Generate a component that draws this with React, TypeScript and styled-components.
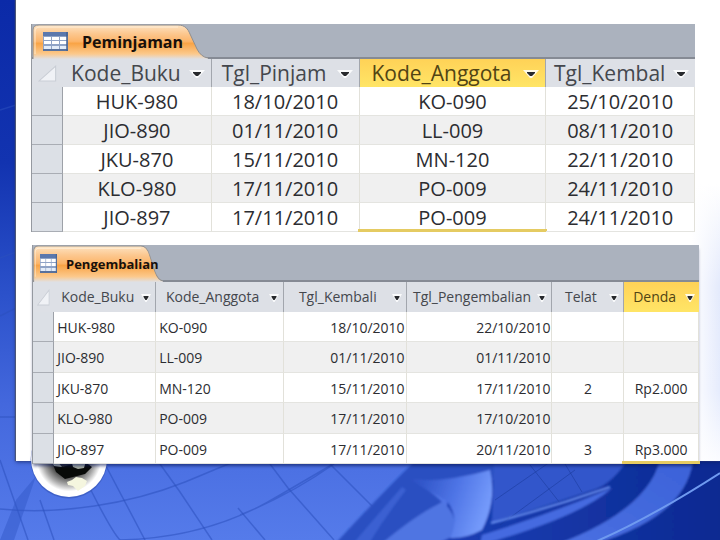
import React from "react";
import styled, { createGlobalStyle, css } from "styled-components";

type Variant = "wide" | "narrow";
type Align = "left" | "center" | "right";

interface Column {
  label: string;
  width: string;
  align: Align;
  active?: boolean;
}

interface Sheet {
  title: string;
  variant: Variant;
  gutter: string;
  columns: Column[];
  rows: string[][];
}

const sheets: Sheet[] = [
  {
    title: "Peminjaman",
    variant: "wide",
    gutter: "4.7%",
    columns: [
      { label: "Kode_Buku", width: "22.4%", align: "center" },
      { label: "Tgl_Pinjam", width: "22.3%", align: "center" },
      { label: "Kode_Anggota", width: "28.2%", align: "center", active: true },
      { label: "Tgl_Kembal", width: "22.4%", align: "center" },
    ],
    rows: [
      ["HUK-980", "18/10/2010", "KO-090", "25/10/2010"],
      ["JIO-890", "01/11/2010", "LL-009", "08/11/2010"],
      ["JKU-870", "15/11/2010", "MN-120", "22/11/2010"],
      ["KLO-980", "17/11/2010", "PO-009", "24/11/2010"],
      ["JIO-897", "17/11/2010", "PO-009", "24/11/2010"],
    ],
  },
  {
    title: "Pengembalian",
    variant: "narrow",
    gutter: "3.2%",
    columns: [
      { label: "Kode_Buku", width: "15.3%", align: "left" },
      { label: "Kode_Anggota", width: "19.2%", align: "left" },
      { label: "Tgl_Kembali", width: "18.4%", align: "right" },
      { label: "Tgl_Pengembalian", width: "21.9%", align: "right" },
      { label: "Telat", width: "10.8%", align: "center" },
      { label: "Denda", width: "11.2%", align: "center", active: true },
    ],
    rows: [
      ["HUK-980", "KO-090", "18/10/2010", "22/10/2010", "", ""],
      ["JIO-890", "LL-009", "01/11/2010", "01/11/2010", "", ""],
      ["JKU-870", "MN-120", "15/11/2010", "17/11/2010", "2", "Rp2.000"],
      ["KLO-980", "PO-009", "17/11/2010", "17/10/2010", "", ""],
      ["JIO-897", "PO-009", "17/11/2010", "20/11/2010", "3", "Rp3.000"],
    ],
  },
];

const GlobalStyle = createGlobalStyle`
  *, *::before, *::after { box-sizing: border-box; }
  body { margin: 0; background: #2c50c8; }
`;

const Page = styled.main`
  position: relative;
  min-height: 100vh;
  overflow: hidden;
  padding-left: 16px;
`;

const Backdrop = styled.svg`
  position: absolute;
  inset: 0;
  width: 100%;
  height: 100%;
`;

const Panel = styled.div`
  position: relative;
  display: flex;
  flex-direction: column;
  gap: 13px;
  padding-top: 24px;
  background: linear-gradient(to bottom, #fff 40%, #e4eafc 62%, #e6ecfd 85%, #fbfcff 100%);
  box-shadow: -1px 0 1px 0 #4a5578, 0 1px 4px 0 rgba(10, 25, 90, 0.7);

  &::before {
    content: "";
    position: absolute;
    inset: 0 0 0 0;
    background: linear-gradient(to right, #fff 96%, rgba(255, 255, 255, 0));
  }
`;

const Globe = styled.svg`
  position: absolute;
  left: 13px;
  bottom: -38px;
  width: 80px;
  height: 80px;
`;

const Window = styled.section<{ $variant: Variant }>`
  position: relative;
  background: #fff;
  border-left: 1px solid #9599a0;
  font-family: "Open Sans", "Noto Sans", sans-serif;
  color: #2c2d31;
  ${(p) =>
    p.$variant === "wide"
      ? css`
          margin: 0 25px 0 15px;
        `
      : css`
          margin: 0 21px -3px 16px;
          box-shadow: 0 3px 3px -1px rgba(10, 25, 90, 0.6);
        `}
`;

const TabBar = styled.div<{ $variant: Variant }>`
  display: flex;
  align-items: flex-end;
  height: ${(p) => (p.$variant === "wide" ? 35 : 37)}px;
  background: #abb2be;
  border-bottom: 2px solid #858a94;
`;

const Tab = styled.button<{ $variant: Variant }>`
  position: relative;
  display: flex;
  align-items: center;
  gap: ${(p) => (p.$variant === "wide" ? 14 : 9)}px;
  width: ${(p) => (p.$variant === "wide" ? 176 : 130)}px;
  height: calc(100% + 2px);
  margin-bottom: -2px;
  padding: 0 0 0 ${(p) => (p.$variant === "wide" ? 11 : 7)}px;
  border: 0;
  background: none;
  color: #17100c;
  font-family: inherit;
  font-size: ${(p) => (p.$variant === "wide" ? 16 : 13)}px;
  font-weight: 700;
  white-space: nowrap;
`;

const TabShape = styled.svg`
  position: absolute;
  inset: 0;
  width: 100%;
  height: 100%;
`;

const SheetIcon = styled.svg<{ $variant: Variant }>`
  position: relative;
  flex: none;
  width: ${(p) => (p.$variant === "wide" ? 25 : 17)}px;
  height: 19px;
`;

const TabLabel = styled.span`
  position: relative;
`;

const Grid = styled.table<{ $variant: Variant }>`
  width: 100%;
  table-layout: fixed;
  border-collapse: separate;
  border-spacing: 0;
  font-size: ${(p) => (p.$variant === "wide" ? 20 : 14)}px;
  line-height: 26px;
`;

const Col = styled.col<{ $width: string }>`
  width: ${(p) => p.$width};
`;

const HeadRow = styled.tr<{ $variant: Variant }>`
  height: ${(p) => (p.$variant === "wide" ? 28 : 30)}px;
`;

const HeadCell = styled.th<{ $active?: boolean }>`
  padding: 0;
  font-weight: 400;
  border-right: 1px solid #a2a6ad;
  background: ${(p) =>
    p.$active ? "linear-gradient(to bottom, #ffd257, #ffe566)" : "#dde0e6"};
  color: ${(p) => (p.$active ? "#514414" : "#44474d")};

  &:last-child {
    border-right: 0;
  }
`;

const Corner = styled.td`
  padding: 0;
  background: #dde0e6;
`;

const CornerMark = styled.svg`
  display: block;
  width: 60%;
  height: 17px;
  margin-left: 20%;
`;

const HeadContent = styled.div`
  display: flex;
  align-items: center;
`;

const HeadText = styled.span<{ $variant: Variant }>`
  flex: 1;
  min-width: 0;
  text-align: center;
  white-space: nowrap;
  font-size: ${(p) => (p.$variant === "wide" ? 21 : 14)}px;
`;

const FilterButton = styled.button<{ $variant: Variant }>`
  display: grid;
  place-items: center;
  flex: none;
  width: ${(p) => (p.$variant === "wide" ? 16 : 10)}px;
  height: 10px;
  margin-right: ${(p) => (p.$variant === "wide" ? 6 : 4)}px;
  padding: 0;
  border: 0;
  background: none;

  svg {
    display: block;
    width: 100%;
    height: 9px;
  }
`;

const BodyRow = styled.tr<{ $variant: Variant }>`
  height: ${(p) => (p.$variant === "wide" ? 29 : 30)}px;
  background: #fff;

  &:nth-child(even) {
    height: ${(p) => (p.$variant === "wide" ? 29 : 31)}px;
    background: #f0f0f0;
  }
`;

const Selector = styled.td`
  padding: 0;
  background: #dce0e6;
  border-right: 1px solid #9da1a8;
  border-bottom: 1px solid #a9adb4;
`;

const Cell = styled.td<{ $align: Align; $marked: boolean }>`
  position: relative;
  padding: 2px 1px 0 ${(p) => (p.$align === "left" ? 3 : 1)}px;
  text-align: ${(p) => p.$align};
  white-space: nowrap;
  border-right: 1px solid #e2e1da;
  border-bottom: 1px solid #e4e4e0;

  ${(p) =>
    p.$marked &&
    css`
      &::after {
        content: "";
        position: absolute;
        left: -2px;
        right: -2px;
        bottom: -1px;
        height: 3px;
        background: #e5cb62;
      }
    `}
`;

function DataSheet({ sheet }: { sheet: Sheet }) {
  const { variant, columns, rows, title, gutter } = sheet;
  const gradientId = `tab-${variant}`;
  return (
    <Window $variant={variant} aria-label={title}>
      <TabBar $variant={variant} role="tablist">
        <Tab $variant={variant} type="button" role="tab" aria-selected="true">
          <TabShape viewBox="0 0 176 35" preserveAspectRatio="none" aria-hidden="true">
            <defs>
              <linearGradient id={gradientId} x1="0" y1="0" x2="0" y2="1">
                <stop offset="0" stopColor="#fde3c3" />
                <stop offset="0.25" stopColor="#fcc890" />
                <stop offset="0.48" stopColor="#fcb56a" />
                <stop offset="0.54" stopColor="#f9a446" />
                <stop offset="0.85" stopColor="#fcc98c" />
                <stop offset="1" stopColor="#dfe0e4" />
              </linearGradient>
            </defs>
            <path
              d="M1 35V6Q1 1 7 1H146C153 1 156 5 158 10L165 25Q169 33 176 34V35Z"
              fill={`url(#${gradientId})`}
            />
            <path
              d="M1 35V6Q1 1 7 1H146C153 1 156 5 158 10L165 25Q169 33 176 34"
              fill="none"
              stroke="#8f8f90"
            />
            <path d="M3 30V7Q3 3 8 3H146" fill="none" stroke="#fff1dd" strokeOpacity="0.8" />
          </TabShape>
          <SheetIcon $variant={variant} viewBox="0 0 25 19" preserveAspectRatio="none" aria-hidden="true">
            <rect width="25" height="19" fill="#8fa3c6" />
            <rect width="25" height="4" fill="#5b78ad" />
            {[5, 9, 14].map((y, row) =>
              [1, 9, 17].map((x) => (
                <rect key={`${x}-${y}`} x={x} y={y} width="7" height="3" fill={row === 2 ? "#e3ecf8" : "#fff"} />
              )),
            )}
            <path d="M0 18H25M24 0V19" stroke="#47628f" strokeWidth="1.5" />
          </SheetIcon>
          <TabLabel>{title}</TabLabel>
        </Tab>
      </TabBar>
      <Grid $variant={variant}>
        <colgroup>
          <Col $width={gutter} />
          {columns.map((c) => (
            <Col key={c.label} $width={c.width} />
          ))}
        </colgroup>
        <thead>
          <HeadRow $variant={variant}>
            <Corner>
              <CornerMark viewBox="0 0 18 16" preserveAspectRatio="none" aria-hidden="true">
                <path d="M1 15H17V1Z" fill="#f0f2f6" stroke="#c9cdd5" />
              </CornerMark>
            </Corner>
            {columns.map((c) => (
              <HeadCell key={c.label} scope="col" $active={c.active}>
                <HeadContent>
                  <HeadText $variant={variant}>{c.label}</HeadText>
                  <FilterButton $variant={variant} type="button" aria-label={`Filter ${c.label}`}>
                    <svg viewBox="0 0 16 9" preserveAspectRatio="none" aria-hidden="true">
                      <path d="M0 1H16L9 9H7Z" fill="#fff" fillOpacity="0.85" />
                      <path d="M4 3H12V4L9 7H7L4 4Z" fill="#27292d" />
                    </svg>
                  </FilterButton>
                </HeadContent>
              </HeadCell>
            ))}
          </HeadRow>
        </thead>
        <tbody>
          {rows.map((row, r) => (
            <BodyRow key={row[0]} $variant={variant}>
              <Selector />
              {row.map((value, i) => (
                <Cell
                  key={columns[i].label}
                  $align={columns[i].align}
                  $marked={Boolean(columns[i].active) && r === rows.length - 1}
                >
                  {value}
                </Cell>
              ))}
            </BodyRow>
          ))}
        </tbody>
      </Grid>
    </Window>
  );
}

function Scene() {
  return (
    <Backdrop viewBox="0 0 720 540" preserveAspectRatio="none" aria-hidden="true">
      <defs>
        <linearGradient id="sky" x1="0" y1="0" x2="0" y2="1">
          <stop offset="0" stopColor="#0b2aa8" />
          <stop offset="0.3" stopColor="#1233b0" />
          <stop offset="0.55" stopColor="#2c52cb" />
          <stop offset="0.75" stopColor="#4468dd" />
          <stop offset="1" stopColor="#557bea" />
        </linearGradient>
        <linearGradient id="deep" x1="0" y1="0" x2="1" y2="0">
          <stop offset="0" stopColor="#1c40b6" />
          <stop offset="1" stopColor="#0a2890" />
        </linearGradient>
        <linearGradient id="blade" x1="0" y1="0" x2="1" y2="0.3">
          <stop offset="0" stopColor="#2449bd" />
          <stop offset="0.6" stopColor="#4f75e6" />
          <stop offset="1" stopColor="#7399fa" />
        </linearGradient>
        <linearGradient id="ribbon" x1="1" y1="0" x2="0" y2="1">
          <stop offset="0" stopColor="#3c62d8" />
          <stop offset="1" stopColor="#4a70e2" />
        </linearGradient>
        <filter id="soft">
          <feGaussianBlur stdDeviation="1.3" />
        </filter>
      </defs>
      <rect width="720" height="540" fill="url(#sky)" />
      <g fill="none" stroke="#2c50bd" strokeOpacity="0.55" strokeWidth="1.5">
        <path d="M0 110L16 105M0 258L16 252M0 316L16 308M0 417H16M0 509C60 515 130 504 185 482S262 445 282 462" />
        <path d="M0 460L28 540M40 500L54 540M78 464Q110 530 120 540M106 466L145 540M160 464L180 492L212 540M270 464L288 488L334 540M238 508L265 540M330 464L380 514L400 540" />
        <path d="M120 540Q210 538 280 495L340 460M240 515Q290 495 334 464" />
      </g>
      <path d="M16 500L0 540H14L36 476Z" fill="#3157c8" fillOpacity="0.5" />
      <g filter="url(#soft)">
        <path d="M440 545L455 460H730V545Z" fill="url(#deep)" />
        <path d="M334 545Q380 495 414 462H500V480L412 480Q430 490 442 502L380 545Z" fill="#2b50c1" />
        <path d="M352 545Q380 512 402 487L406 490Q384 518 368 545Z" fill="#3a60d2" />
        <path d="M380 545Q418 513 443 502Q459 516 454 535Q440 545 420 545Z" fill="#4f75e2" />
        <path d="M494 462H626Q610 486 590 491L492 523Z" fill="#3157cb" />
        <path d="M410 480Q449 482 490 470Q497 501 482 530Q465 539 450 538Q460 518 447 501Z" fill="url(#blade)" />
        <path d="M482 535Q550 514 612 488Q580 517 480 545Z" fill="#456be0" />
        <path d="M555 545Q647 511 660 460H693Q686 518 590 545Z" fill="url(#ribbon)" />
      </g>
      <g fill="none" stroke="#183798" strokeOpacity="0.5">
        <path d="M495 500L550 462M500 525L575 470M530 465L560 503M565 464L582 492" />
      </g>
      <path d="M491 523Q550 508 610 487" fill="none" stroke="#6b90f0" strokeWidth="2" filter="url(#soft)" />
      <path d="M597 541Q650 518 720 473" fill="none" stroke="#6f9af0" strokeWidth="2" />
    </Backdrop>
  );
}

export default function App() {
  return (
    <>
      <GlobalStyle />
      <Page>
        <Scene />
        <Panel>
          <Globe viewBox="0 0 80 80" aria-hidden="true">
            <defs>
              <radialGradient id="globe">
                <stop offset="0" stopColor="#1b1b1b" />
                <stop offset="0.4" stopColor="#30302f" />
                <stop offset="0.68" stopColor="#aaa" />
                <stop offset="0.85" stopColor="#fff" />
              </radialGradient>
            </defs>
            <circle cx="40" cy="41" r="38.5" fill="#3454b6" fillOpacity="0.6" />
            <circle cx="40" cy="40" r="38" fill="url(#globe)" />
            <path d="M23 43L34 48L43 45L56 43L63 48L56 55L48 57L36 60L27 53Z" fill="#080a08" />
            <path d="M43 44L57 42L55 49L49 50L44 48ZM22 42H28L33 48L25 47Z" fill="#a9afa2" />
            <path d="M38 63L43 61L47 58L53 59L58 62L56 67L49 72L44 67L39 66Z" fill="#f5f6df" />
          </Globe>
          {sheets.map((sheet) => (
            <DataSheet key={sheet.title} sheet={sheet} />
          ))}
        </Panel>
      </Page>
    </>
  );
}
